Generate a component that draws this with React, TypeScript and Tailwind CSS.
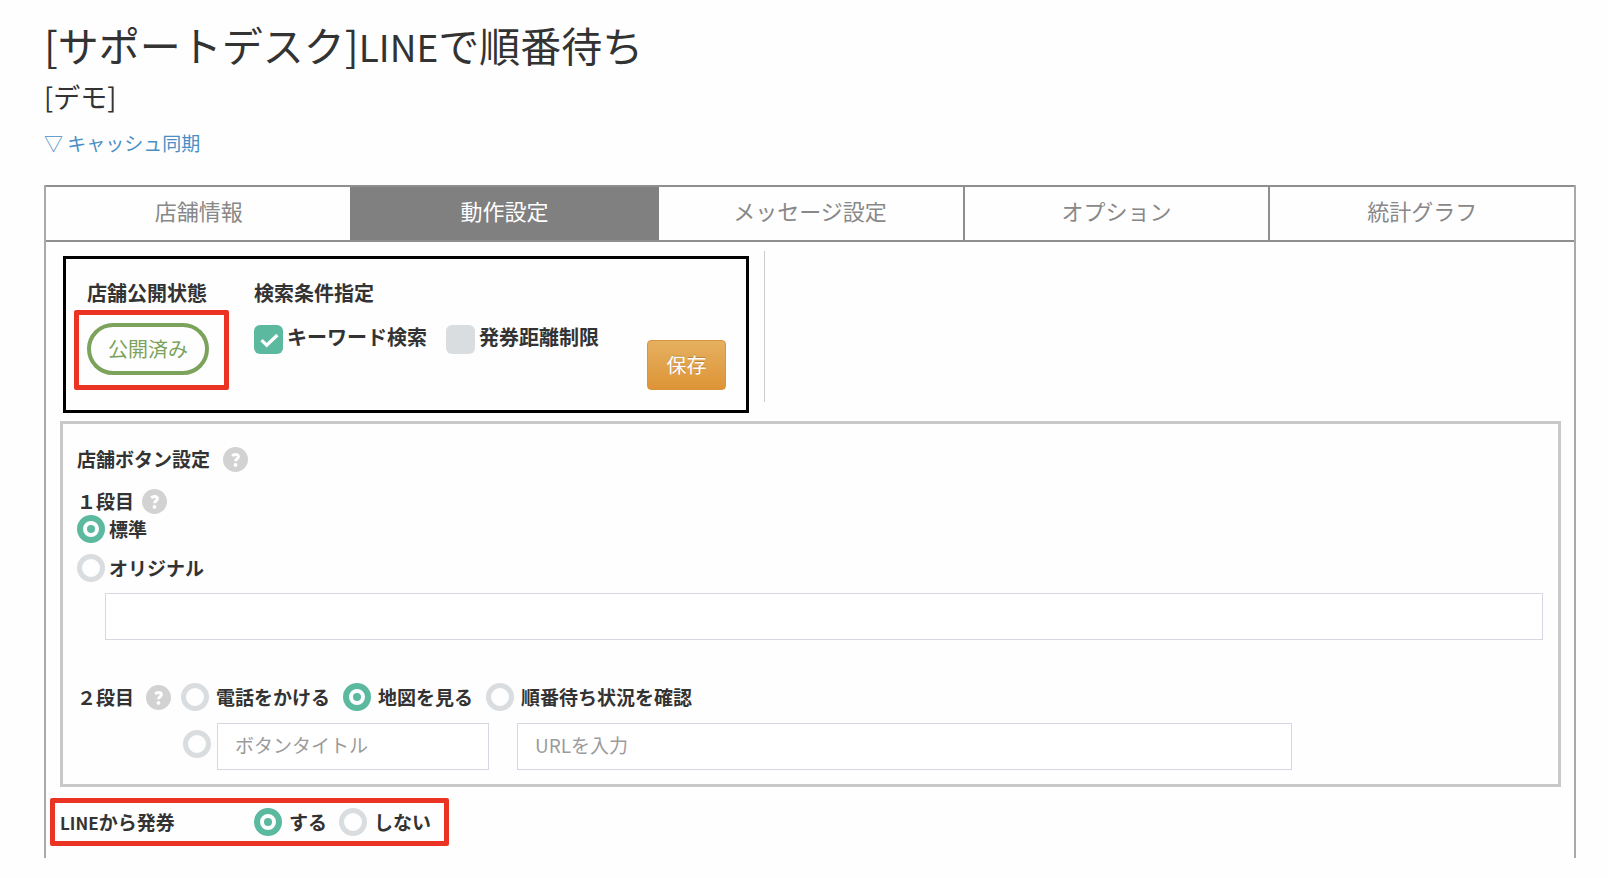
import { useState } from "react";
import type { ReactNode } from "react";
import clsx from "clsx";

const tabs = ["店舗情報", "動作設定", "メッセージ設定", "オプション", "統計グラフ"];

const secondRowOptions = [
  { value: "tel", label: "電話をかける" },
  { value: "map", label: "地図を見る" },
  { value: "queue", label: "順番待ち状況を確認" },
];

const radioClass =
  "relative size-7 shrink-0 appearance-none rounded-full border-[5px] border-[#d9dde0] checked:border-6 checked:border-[#5ab99f] checked:after:absolute checked:after:inset-1 checked:after:rounded-full checked:after:bg-[#5ab99f]";

const textInputClass =
  "h-[47px] border border-[#d5d8e2] bg-white px-[17px] pb-1 text-[19px] text-[#333] outline-none placeholder:text-[#9b9b9b]";

function Help() {
  return (
    <button
      type="button"
      aria-label="ヘルプ"
      className="flex size-[25px] shrink-0 items-center justify-center rounded-full bg-[#d2d2d2]"
    >
      <svg viewBox="0 0 25 25" className="size-[25px]" fill="none">
        <path
          d="M9.2 8.9c.9-1 2-1.4 3.3-1.4 1.8 0 2.9.8 2.9 2.2 0 1.9-2.8 2-2.8 4.6"
          stroke="#fff"
          strokeWidth="3"
        />
        <circle cx="12.5" cy="17.9" r="1.9" fill="#fff" />
      </svg>
    </button>
  );
}

function Checkbox({
  label,
  defaultChecked,
}: {
  label: string;
  defaultChecked?: boolean;
}) {
  return (
    <label className="flex items-start gap-1 text-[20px] leading-6 font-bold">
      <span className="relative flex size-[29px] shrink-0">
        <input
          type="checkbox"
          defaultChecked={defaultChecked}
          className="peer size-full appearance-none rounded-md bg-[#d9dde0] checked:bg-[#5ab99f]"
        />
        <svg
          viewBox="0 0 29 29"
          fill="none"
          className="pointer-events-none absolute inset-0 hidden peer-checked:block"
        >
          <path d="M7.5 15.2l5.2 5L23.4 10" stroke="#fff" strokeWidth="3.2" />
        </svg>
      </span>
      {label}
    </label>
  );
}

type RadioProps = {
  name: string;
  value: string;
  current: string;
  onSelect: (value: string) => void;
  className?: string;
  children: ReactNode;
};

function Radio({ name, value, current, onSelect, className, children }: RadioProps) {
  return (
    <label className={clsx("flex items-center font-bold", className)}>
      <input
        type="radio"
        name={name}
        value={value}
        checked={current === value}
        onChange={() => onSelect(value)}
        className={radioClass}
      />
      {children}
    </label>
  );
}

export default function App() {
  const [firstRow, setFirstRow] = useState("standard");
  const [secondRow, setSecondRow] = useState("map");
  const [issue, setIssue] = useState("yes");

  return (
    <div className="min-h-screen bg-[#fefefe] pt-3 pr-8 pl-11 font-['Noto_Sans_CJK_JP',sans-serif] text-[19px] leading-7 text-[#333]">
      <header>
        <h1 className="text-[41px] leading-[65px]">
          [サポートデスク]<span className="text-[37px] leading-none">LINE</span>で順番待ち
        </h1>
        <p className="text-[27px] leading-10">[デモ]</p>
        <a href="#sync" className="mt-3 inline-block text-[#4a8fc4]">
          ▽ キャッシュ同期
        </a>
      </header>

      <main className="mt-7 border-x-2 border-[#a9a9a9] pb-3">
        <nav className="grid grid-cols-5 border-y-2 border-[#8f8f8f]">
          {tabs.map((tab, i) => (
            <a
              key={tab}
              href="#"
              aria-current={i === 1 ? "page" : undefined}
              className={clsx(
                "flex h-[53px] items-center justify-center pb-2 text-[22px]",
                i === 1 ? "-mx-0.5 bg-[#808080] text-white" : "text-[#888]",
                i > 2 && "border-l-2 border-[#8f8f8f]"
              )}
            >
              {tab}
            </a>
          ))}
        </nav>

        {/* Publish state and search conditions */}
        <div className="flex pt-[9px] pl-[17px]">
          <section className="mt-[5px] flex w-[686px] items-start border-3 border-black pr-5 pb-5 pl-2">
            <div className="pt-5">
              <h2 className="pl-[13px] text-[20px] font-bold">店舗公開状態</h2>
              <div className="mt-[3px] rounded-xs border-5 border-[#eb3323] pt-2 pr-[15px] pb-[10px] pl-2">
                <button
                  type="button"
                  className="block h-[52px] w-[122px] rounded-full border-4 border-[#7ba35b] text-[20px] text-[#7ba35b]"
                >
                  公開済み
                </button>
              </div>
            </div>
            <div className="ml-[25px] pt-5">
              <h2 className="text-[20px] font-bold">検索条件指定</h2>
              <div className="mt-[18px] flex gap-[19px]">
                <Checkbox label="キーワード検索" defaultChecked />
                <Checkbox label="発券距離制限" />
              </div>
            </div>
            <button
              type="button"
              className="mt-auto ml-auto h-[50px] w-[79px] rounded-sm border border-[#d9953a] bg-linear-to-b from-[#e5b05f] to-[#de9436] text-[20px] text-white text-shadow-[0_-1px_0_rgb(0_0_0/0.2)]"
            >
              保存
            </button>
          </section>
          <div className="ml-[15px] h-[151px] border-l border-[#ccc]" />
        </div>

        {/* Shop button settings */}
        <section className="mt-2 mr-[13px] ml-[14px] border-3 border-[#c9c9c9] pt-[21px] pr-[15px] pb-[14px] pl-[14px]">
          <div className="flex items-center gap-[13px]">
            <h2 className="font-bold">店舗ボタン設定</h2>
            <Help />
          </div>
          <div className="mt-[14px] flex items-center gap-2">
            <h3 className="font-bold">１段目</h3>
            <Help />
          </div>
          <Radio
            name="first"
            value="standard"
            current={firstRow}
            onSelect={setFirstRow}
            className="gap-1"
          >
            標準
          </Radio>
          <Radio
            name="first"
            value="original"
            current={firstRow}
            onSelect={setFirstRow}
            className="mt-[11px] gap-1"
          >
            オリジナル
          </Radio>
          <div className="mt-[11px] flex pl-7">
            <input
              type="text"
              aria-label="オリジナル"
              className={clsx(textInputClass, "w-full")}
            />
          </div>

          <div className="mt-[43px] flex items-center">
            <h3 className="font-bold">２段目</h3>
            <div className="ml-3">
              <Help />
            </div>
            <div className="ml-[10px] flex gap-[13px]">
              {secondRowOptions.map((option) => (
                <Radio
                  key={option.value}
                  name="second"
                  value={option.value}
                  current={secondRow}
                  onSelect={setSecondRow}
                  className="gap-[7px]"
                >
                  {option.label}
                </Radio>
              ))}
            </div>
          </div>
          <div className="mt-3 flex items-start pl-[106px]">
            <input
              type="radio"
              name="second"
              value="custom"
              aria-label="ボタンタイトル"
              checked={secondRow === "custom"}
              onChange={() => setSecondRow("custom")}
              className={clsx(radioClass, "mt-[7px]")}
            />
            <input
              type="text"
              aria-label="ボタンタイトル"
              placeholder="ボタンタイトル"
              className={clsx(textInputClass, "ml-[6px] w-[272px]")}
            />
            <input
              type="url"
              aria-label="URLを入力"
              placeholder="URLを入力"
              className={clsx(textInputClass, "ml-7 w-[57%]")}
            />
          </div>
        </section>

        {/* Ticket issuing from LINE */}
        <fieldset className="mt-[11px] ml-1 flex w-[399px] items-center rounded-xs border-5 border-[#eb3323] py-[5px] pl-[5px]">
          <span className="w-[194px] font-bold">
            <span className="text-[17px] leading-none">LINE</span>から発券
          </span>
          <div className="flex gap-3">
            <Radio name="issue" value="yes" current={issue} onSelect={setIssue} className="gap-[7px]">
              する
            </Radio>
            <Radio name="issue" value="no" current={issue} onSelect={setIssue} className="gap-[7px]">
              しない
            </Radio>
          </div>
        </fieldset>
      </main>
    </div>
  );
}
